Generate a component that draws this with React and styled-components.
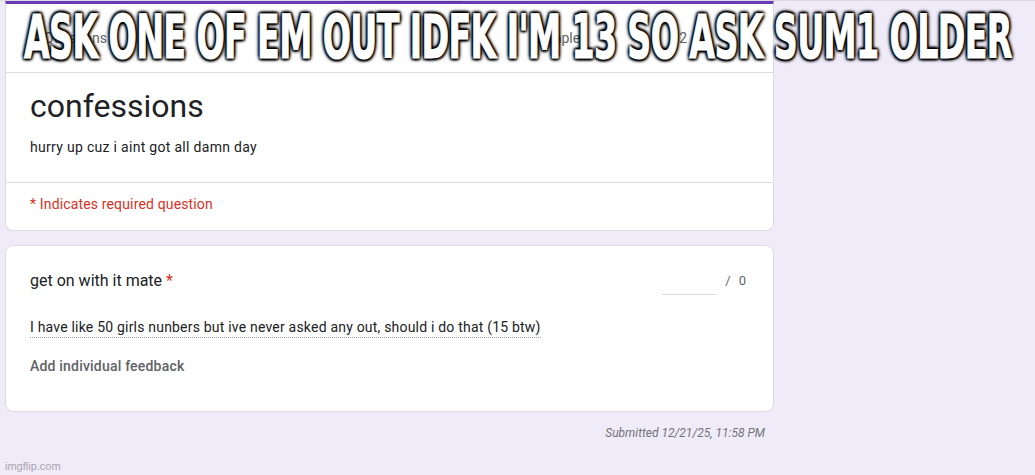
import React, { useLayoutEffect, useRef, useState } from 'react';
import styled, { createGlobalStyle } from 'styled-components';

const GlobalStyle = createGlobalStyle`
  html, body {
    margin: 0;
    padding: 0;
    background: #f0ebf8;
    font-family: Roboto, "Noto Sans", Arial, sans-serif;
    color: #202124;
  }
`;

const Page = styled.div`
  position: relative;
  width: 1035px;
  height: 475px;
  overflow: hidden;
  background: #f0ebf8;
  border-top: 1px solid #dcd8e4;
  box-sizing: border-box;
`;

const Column = styled.div`
  width: 769px;
  margin-left: 5px;
  display: flex;
  flex-direction: column;
  gap: 14px;
`;

const Card = styled.div`
  background: #fff;
  border: 1px solid #dadce0;
  border-radius: ${p => (p.$top ? '0 0 8px 8px' : '8px')};
  border-top: ${p => (p.$top ? '3px solid #673ab7' : '1px solid #dadce0')};
  box-sizing: border-box;
  position: relative;
`;

const TabMark = styled.div`
  position: absolute;
  top: -4px;
  left: 340px;
  width: 116px;
  height: 2px;
  background: #5b2fa8;
`;

const HeaderRow = styled.div`
  height: 68px;
  display: flex;
  align-items: center;
  justify-content: space-between;
  padding: 0 86px 0 38px;
  border-bottom: 1px solid #dadce0;
  font-size: 14px;
  color: #5f6368;
`;

const Nav = styled.div`
  display: flex;
  gap: 99px;
`;

const TitleBlock = styled.div`
  padding: 14px 24px 25px 24px;
  border-bottom: 1px solid #dadce0;
`;

const Title = styled.h1`
  margin: 0;
  font-size: 32px;
  font-weight: 400;
  line-height: 38px;
  color: #202124;
`;

const Description = styled.p`
  margin: 12px 0 0;
  font-size: 14px;
  line-height: 20px;
  letter-spacing: 0.3px;
  color: #202124;
`;

const Required = styled.div`
  padding: 11px 24px 16px;
  font-size: 14px;
  line-height: 20px;
  letter-spacing: 0.15px;
  color: #d93025;
`;

const QuestionBody = styled.div`
  padding: 23px 24px 37px;
  display: flex;
  flex-direction: column;
`;

const QuestionTop = styled.div`
  height: 24px;
  display: flex;
  justify-content: space-between;
  align-items: flex-start;
`;

const QuestionText = styled.div`
  font-size: 16px;
  line-height: 24px;
  color: #202124;
`;

const Star = styled.span`
  color: #d93025;
`;

const Score = styled.div`
  display: flex;
  align-items: center;
  gap: 8px;
  font-size: 13px;
  color: #5f6368;
  padding-right: 3px;
  margin-top: -3px;
`;

const ScoreInput = styled.div`
  width: 55px;
  height: 20px;
  border-bottom: 1px solid #dadce0;
  margin-top: 8px;
`;

const Answer = styled.div`
  align-self: flex-start;
  margin-top: 24px;
  font-size: 14px;
  line-height: 20px;
  letter-spacing: 0.2px;
  color: #202124;
  border-bottom: 1px dotted #9aa0a6;
`;

const Feedback = styled.div`
  margin-top: 20px;
  font-size: 14px;
  font-weight: 500;
  letter-spacing: 0.2px;
  color: #5f6368;
`;

const Submitted = styled.div`
  text-align: right;
  padding-right: 9px;
  font-size: 12px;
  font-style: italic;
  color: #70757a;
`;

const Watermark = styled.div`
  position: absolute;
  left: 5px;
  bottom: 3px;
  font-family: "Liberation Sans", Arial, sans-serif;
  font-size: 11px;
  color: #a8a4b0;
`;

const CaptionWrap = styled.div`
  position: absolute;
  top: 6px;
  left: 0;
  width: 1035px;
  display: flex;
  justify-content: center;
  pointer-events: none;
`;

const Caption = styled.div`
  font-family: Impact, "DejaVu Sans Condensed", "DejaVu Sans", sans-serif;
  font-weight: 700;
  font-size: 60px;
  line-height: 60px;
  letter-spacing: -1px;
  color: #fff;
  white-space: nowrap;
  transform-origin: center top;
  -webkit-text-stroke: 1px #fff;
  text-shadow:
    2px 2px 3px #000, -2px -2px 3px #000, 2px -2px 3px #000, -2px 2px 3px #000,
    0 0 5px #000, 0 0 7px #000;
`;

function MemeCaption({ children, width }) {
  const ref = useRef(null);
  const [scale, setScale] = useState(1);

  useLayoutEffect(() => {
    if (ref.current) {
      const w = ref.current.scrollWidth;
      if (w) setScale(width / w);
    }
  }, [width]);

  return (
    <CaptionWrap>
      <Caption ref={ref} style={{ transform: `scaleX(${scale})` }}>
        {children}
      </Caption>
    </CaptionWrap>
  );
}

export default function App() {
  return (
    <>
      <GlobalStyle />
      <Page>
        <Column>
          <Card $top>
            <TabMark />
            <HeaderRow>
              <span>Questions</span>
              <Nav>
                <span>Sample</span>
                <span>2</span>
              </Nav>
            </HeaderRow>
            <TitleBlock>
              <Title>confessions</Title>
              <Description>hurry up cuz i aint got all damn day</Description>
            </TitleBlock>
            <Required>* Indicates required question</Required>
          </Card>

          <Card>
            <QuestionBody>
              <QuestionTop>
                <QuestionText>
                  get on with it mate <Star>*</Star>
                </QuestionText>
                <Score>
                  <ScoreInput />
                  <span>/</span>
                  <span>0</span>
                </Score>
              </QuestionTop>
              <Answer>I have like 50 girls nunbers but ive never asked any out, should i do that (15 btw)</Answer>
              <Feedback>Add individual feedback</Feedback>
            </QuestionBody>
          </Card>

          <Submitted>Submitted 12/21/25, 11:58 PM</Submitted>
        </Column>
        <MemeCaption width={988}>ASK ONE OF EM OUT IDFK I'M 13 SO ASK SUM1 OLDER</MemeCaption>
        <Watermark>imgflip.com</Watermark>
      </Page>
    </>
  );
}
